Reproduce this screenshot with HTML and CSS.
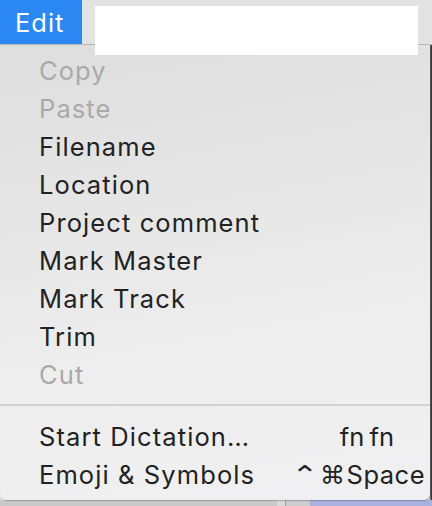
FILE: index.html
```html
<!DOCTYPE html>
<html>
<head>
<meta charset="utf-8">
<link rel="stylesheet" href="styles.css">
</head>
<body>
<div class="screen">
  <div class="menubar">
    <div class="menubar-item active">Edit</div>
  </div>
  <div class="redact"></div>
  <div class="menu">
    <div class="item disabled">Copy</div>
    <div class="item disabled">Paste</div>
    <div class="item">Filename</div>
    <div class="item">Location</div>
    <div class="item">Project comment</div>
    <div class="item">Mark Master</div>
    <div class="item">Mark Track</div>
    <div class="item">Trim</div>
    <div class="item disabled">Cut</div>
    <div class="separator"></div>
    <div class="item"><span>Start Dictation…</span><span class="shortcut fn">fn fn</span></div>
    <div class="item"><span>Emoji &amp; Symbols</span><span class="shortcut"><span class="ctrl">⌃</span><span class="cmd">⌘</span>Space</span></div>
  </div>
  <div class="below">
    <div class="b1"></div><div class="b2"></div><div class="b3"></div><div class="b4"></div>
  </div>
</div>
</body>
</html>
```
FILE: styles.css
```css
html, body {
  margin: 0;
  padding: 0;
}
body {
  width: 432px;
  height: 506px;
  overflow: hidden;
  background: #d8d8d8;
  font-family: Inter, "Noto Sans", sans-serif;
}
.screen {
  position: relative;
  width: 432px;
  height: 506px;
  background: linear-gradient(to right, #e2e2e2 430px, #9a9a9a 430px, #3a3a3a 431px);
}
.menubar {
  height: 44px;
  background: #e3e3e3;
  border-bottom: 1px solid #b4b4b4;
  display: flex;
}
.menubar-item {
  height: 44px;
  box-sizing: border-box;
  padding: 0 0 0 15px;
  display: flex;
  align-items: center;
  font-size: 25.5px;
  letter-spacing: 1px;
  color: #fff;
}
.menubar-item.active {
  background: #2b87f1;
  width: 82px;
}
.redact {
  position: absolute;
  left: 95px;
  top: 6px;
  width: 323px;
  height: 49px;
  background: #fff;
  z-index: 2;
}
.menu {
  width: 430px;
  height: 455px;
  box-sizing: border-box;
  padding-top: 7px;
  background: linear-gradient(170deg, #dedede 0%, #e6e6e6 35%, #eeeeee 65%, #f0f0f2 100%);
  border-radius: 0 0 7px 7px;
  box-shadow: 1px 1px 1px rgba(0,0,0,0.25);
  position: relative;
  z-index: 1;
}
.item {
  height: 38px;
  line-height: 38px;
  padding-left: 39px;
  padding-right: 5px;
  font-size: 25.5px;
  letter-spacing: 1.1px;
  color: #222222;
  display: flex;
  justify-content: space-between;
  white-space: nowrap;
}
.item.disabled {
  color: #a9a9a9;
}
.shortcut {
  letter-spacing: 0.5px;
  display: flex;
  align-items: baseline;
}
.shortcut.fn {
  padding-right: 31px;
  letter-spacing: 0;
  word-spacing: -2px;
}
.ctrl {
  font-family: "DejaVu Sans", sans-serif;
  font-size: 26px;
  margin-right: 4px;
  transform: scaleX(1.25);
  display: inline-block;
}
.cmd {
  font-family: "DejaVu Sans", sans-serif;
  font-size: 25px;
  margin-right: 1px;
}
.separator {
  height: 2px;
  background: #d3d3d3;
  margin: 10px 0 12px 0;
}
.below {
  display: flex;
  height: 6px;
}
.b1 { width: 277px; background: #c9c9c9; }
.b2 { width: 8px; background: #d9d9d9; border-right: 1px solid #a0a0a0; }
.b3 { width: 24px; background: #cdcdcd; }
.b4 { flex: 1; background: #aab1dc; }
```
